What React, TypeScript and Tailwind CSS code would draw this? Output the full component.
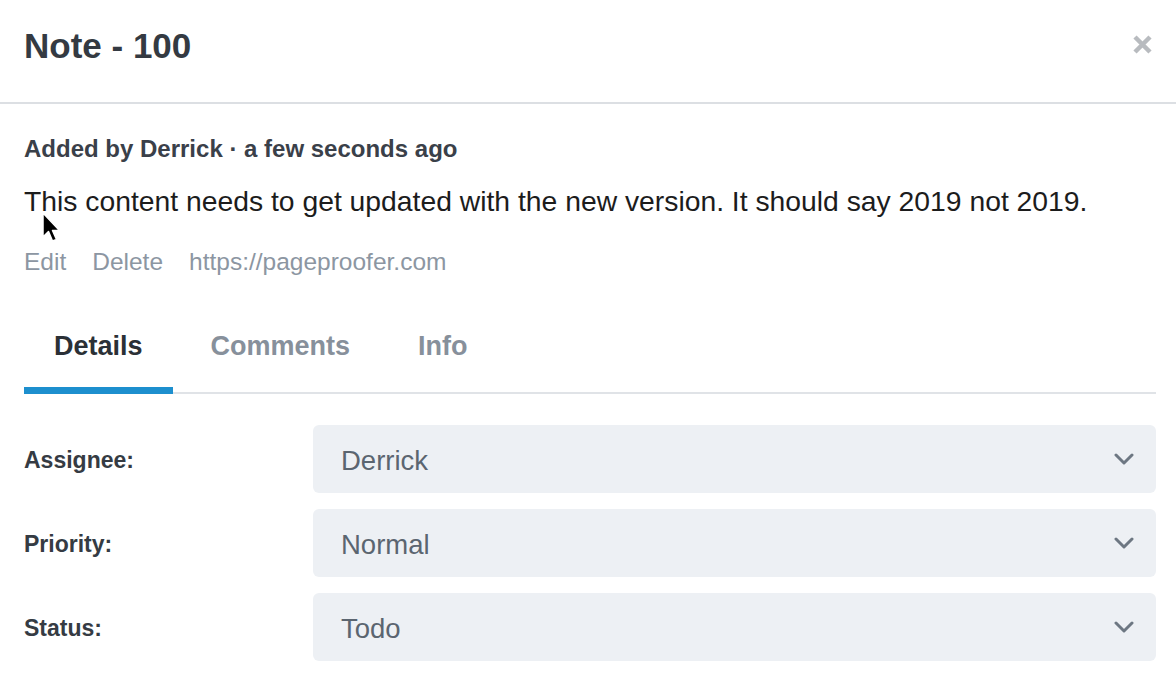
import React from "react";

function Chevron() {
  return (
    <svg width="20" height="14" viewBox="0 0 20 14" fill="none">
      <path d="M2 3 L10 11 L18 3" stroke="#6d7782" strokeWidth="3" strokeLinecap="round" strokeLinejoin="round" />
    </svg>
  );
}

function SelectRow({ label, value }: { label: string; value: string }) {
  return (
    <div className="grid grid-cols-[289px_1fr] items-center">
      <div className="pt-[4px] text-[23px] font-bold text-[#353b43]">{label}</div>
      <div className="h-[68px] rounded-md bg-[#edf0f4] flex items-center justify-between pl-[28px] pr-[22px]">
        <span className="pt-[5px] text-[27.5px] text-[#5b6570] leading-none">{value}</span>
        <Chevron />
      </div>
    </div>
  );
}

export default function App() {
  return (
    <div className="relative w-[1176px] h-[692px] overflow-hidden bg-white font-['Liberation_Sans',Arial,sans-serif]">
      <div className="h-[104px] border-b-2 border-[#dcdfe3] flex justify-between items-start pl-6 pr-[23px]">
        <h1 className="mt-[28px] text-[35px] leading-[35px] font-bold text-[#343a42]">Note - 100</h1>
        <svg className="mt-[34px]" width="21" height="21" viewBox="0 0 21 21">
          <path d="M3 3 L18 18 M18 3 L3 18" stroke="#b8bbbf" strokeWidth="4.5" strokeLinecap="butt" />
        </svg>
      </div>

      <div className="pl-6 pr-5">
        <div className="mt-[33px] text-[24px] leading-[24px] font-bold text-[#3a4049]">
          Added by Derrick · a few seconds ago
        </div>
        <div className="mt-[26px] text-[28.3px] leading-[28px] text-[#1c1c1c]">
          This content needs to get updated with the new version. It should say 2019 not 2019.
        </div>
        <div className="mt-[35px] flex gap-[26px] text-[24.5px] leading-[24.5px] text-[#8c96a2]">
          <span>Edit</span>
          <span>Delete</span>
          <span>https://pageproofer.com</span>
        </div>

        <div className="mt-[58px] flex gap-2 border-b-2 border-[#e0e3e7]">
          <div className="px-[30px] pb-[27px] border-b-[7px] border-[#1d8fce] -mb-[2px] text-[27px] leading-[27px] font-bold text-[#2b3036]">
            Details
          </div>
          <div className="px-[30px] pb-[27px] border-b-[7px] border-transparent -mb-[2px] text-[27px] leading-[27px] font-bold text-[#87909b]">
            Comments
          </div>
          <div className="px-[30px] pb-[27px] border-b-[7px] border-transparent -mb-[2px] text-[27px] leading-[27px] font-bold text-[#87909b]">
            Info
          </div>
        </div>

        <div className="mt-[31px] flex flex-col gap-4">
          <SelectRow label="Assignee:" value="Derrick" />
          <SelectRow label="Priority:" value="Normal" />
          <SelectRow label="Status:" value="Todo" />
        </div>
      </div>

      <svg className="absolute left-[41px] top-[211px]" width="20" height="34" viewBox="0 0 20 34">
        <path d="M2 2 L2 26 L7.5 20.5 L11.5 30 L15.5 28.5 L11.5 19.5 L18.5 19.5 Z" fill="#000" stroke="#fff" strokeWidth="1.5" strokeLinejoin="round" />
      </svg>
    </div>
  );
}
